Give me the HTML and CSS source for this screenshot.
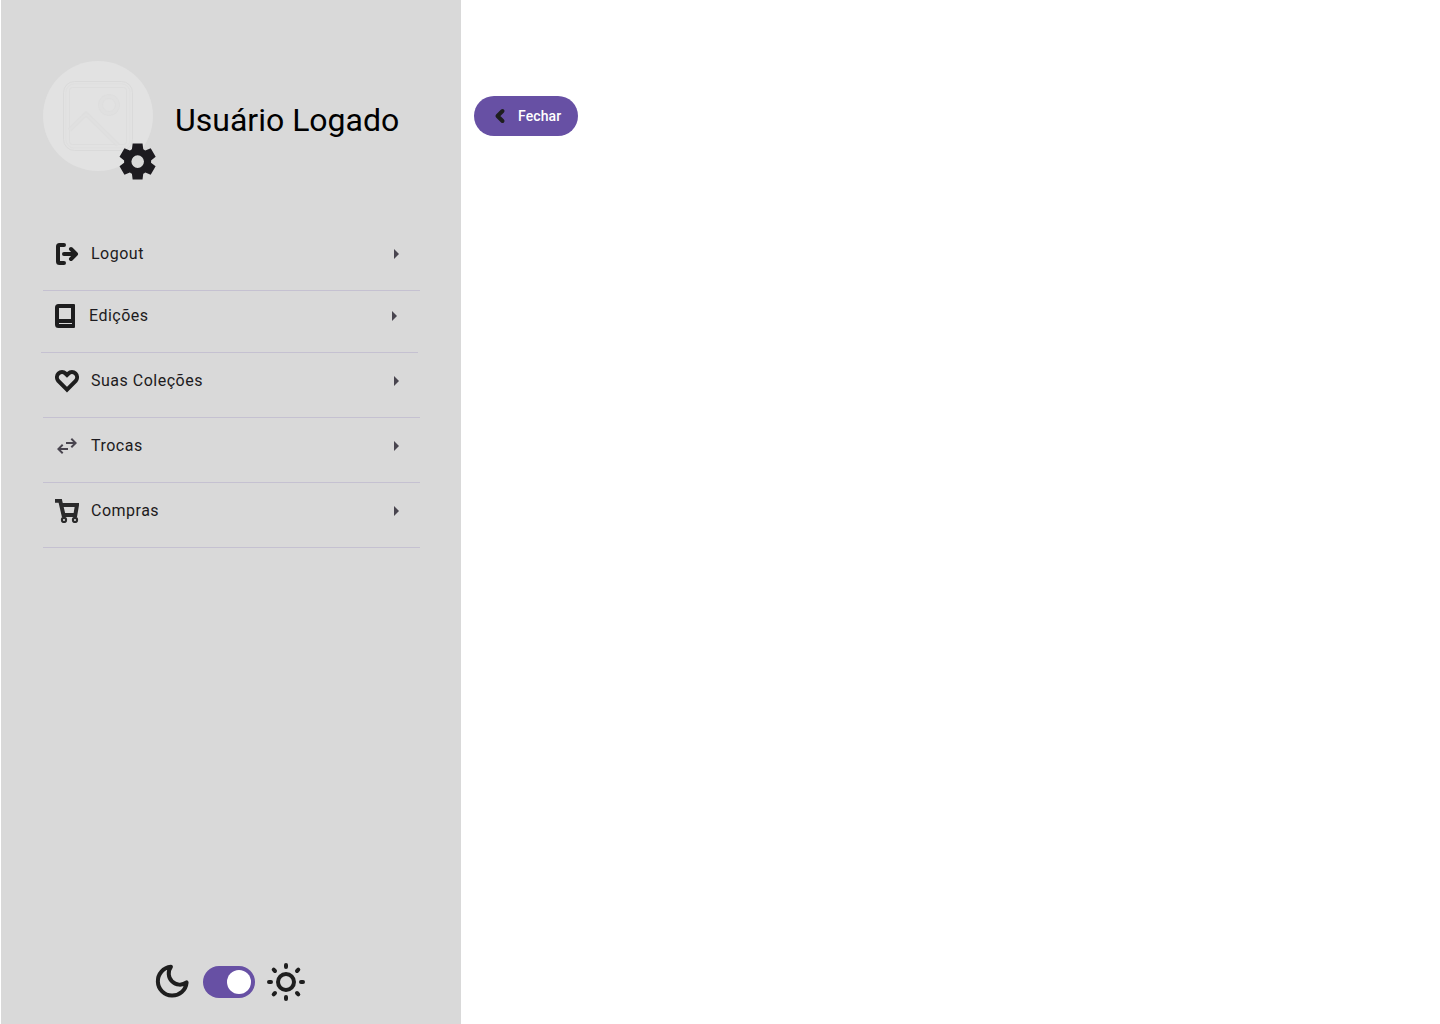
FILE: index.html
```html
<!DOCTYPE html>
<html lang="pt-BR">
<head>
<meta charset="utf-8">
<title>Menu do usuário</title>
<link rel="stylesheet" href="styles.css">
</head>
<body>
<div class="page">
  <aside class="sidebar">
    <header class="profile">
      <div class="avatar">
        <svg class="avatar-image" viewBox="0 0 70 70" fill="none">
          <g stroke="#dadada" stroke-width="1">
            <rect x=".5" y=".5" width="69" height="69" rx="11"/>
            <rect x="3" y="3" width="64" height="64" rx="8" stroke="#dfdfdf"/>
            <rect x="6.500" y="6.500" width="57" height="57" rx="3" stroke="#dddddd"/>
          </g>
          <circle cx="46" cy="24" r="8.500" stroke="#dedede" stroke-width="5"/>
          <circle cx="46" cy="24" r="8.500" stroke="#e0e0e0" stroke-width="3"/>
          <path d="M6.500 49L23 33L55 64" stroke="#dedede" stroke-width="4.500"/>
          <path d="M6.500 49L23 33L55 64" stroke="#e0e0e0" stroke-width="2.500"/>
        </svg>
        <svg class="gear" viewBox="0 0 24 24"><path fill="#1d1b20" fill-rule="evenodd" d="M9.25 22l-.4-3.2q-.325-.125-.612-.3-.288-.175-.563-.375L4.7 19.375l-2.75-4.75 2.575-1.95Q4.5 12.5 4.5 12.337v-.675q0-.162.025-.337L1.95 9.375l2.75-4.75 2.975 1.25q.275-.2.575-.375.3-.175.6-.3l.4-3.2h5.5l.4 3.2q.325.125.613.3.287.175.562.375l2.975-1.25 2.75 4.75-2.575 1.95q.025.175.025.338v.674q0 .163-.05.338l2.575 1.95-2.75 4.75-2.95-1.25q-.275.2-.575.375-.3.175-.6.3l-.4 3.2zM12.05 15.5a3.5 3.5 0 1 0 0-7 3.5 3.5 0 0 0 0 7z"/></svg>
      </div>
      <h1 class="name">Usuário Logado</h1>
    </header>
    <nav class="menu">
      <a class="item">
        <svg class="icon" viewBox="0 0 24 24" fill="none" stroke="#1e1e1e" stroke-width="4" stroke-linecap="round" stroke-linejoin="round"><path d="M9 3H4.5Q3 3 3 4.5v15Q3 21 4.5 21H9M9 12h11M16 7l5 5-5 5"/></svg>
        <span class="label">Logout</span>
        <svg class="caret" viewBox="0 0 5 10"><path d="M0 0l5 5-5 5z"/></svg>
      </a>
      <a class="item item-editions">
        <svg class="icon" viewBox="0 0 24 24"><path fill="#1d1d1e" fill-rule="evenodd" d="M3.500 0H19q1 0 1 1v22q0 1-1 1H3.500Q0 24 0 20.500V3.500Q0 0 3.500 0zM4 4v11h12V4zM4 19v1h13v-1z"/></svg>
        <span class="label">Edições</span>
        <svg class="caret" viewBox="0 0 5 10"><path d="M0 0l5 5-5 5z"/></svg>
      </a>
      <a class="item">
        <svg class="icon" viewBox="0 0 24 24" fill="none" stroke="#1e1e1e" stroke-width="4"><path d="M12 20.600L3.300 11.900C1.500 9.700 1.500 6.400 3.500 4.500 5.500 2.600 8.600 2.600 10.500 4.500L12 6l1.500-1.500c1.900-1.900 5-1.900 7 0 2 1.900 2 5.200.2 7.400z"/></svg>
        <span class="label">Suas Coleções</span>
        <svg class="caret" viewBox="0 0 5 10"><path d="M0 0l5 5-5 5z"/></svg>
      </a>
      <a class="item">
        <svg class="icon" viewBox="0 0 24 24"><path fill="#49454f" d="M7 20l-5-5 5-5 1.400 1.400L5.800 14H13v2H5.800l2.600 2.600zM17 14l-1.400-1.400L18.200 10H11V8h7.200l-2.600-2.600L17 4l5 5z"/></svg>
        <span class="label">Trocas</span>
        <svg class="caret" viewBox="0 0 5 10"><path d="M0 0l5 5-5 5z"/></svg>
      </a>
      <a class="item">
        <svg class="icon" viewBox="0 0 24 24" fill="none" stroke="#2a2a2b"><path stroke-width="4" d="M0 1.800h5.200L8.500 16H20.300L22 6H6.200"/><circle cx="9" cy="21" r="2.100" stroke-width="2.100"/><circle cx="20" cy="21" r="2.100" stroke-width="2.100"/></svg>
        <span class="label">Compras</span>
        <svg class="caret" viewBox="0 0 5 10"><path d="M0 0l5 5-5 5z"/></svg>
      </a>
    </nav>
    <footer class="theme">
      <svg class="moon" viewBox="0 0 24 24" fill="none" stroke="#1e1e1e" stroke-width="2.500" stroke-linecap="round" stroke-linejoin="round"><path d="M21 12.790A9 9 0 1 1 11.210 3 7 7 0 0 0 21 12.790z"/></svg>
      <span class="switch"><span class="knob"></span></span>
      <svg class="sun" viewBox="-19 -19 38 38" fill="none" stroke="#1e1e1e" stroke-width="4" stroke-linecap="round"><circle r="8"/><path d="M0-17v2M0 15v2M-17 0h2M15 0h2M-12.300-12.300l1.300 1.300M11 11l1.300 1.300M-12.300 12.300l1.300-1.300M11-11l1.300-1.300"/></svg>
    </footer>
  </aside>
  <main class="content">
    <button class="close" type="button">
      <svg class="chevron" viewBox="0 0 18 18" fill="none" stroke="#1e1e1e" stroke-width="4" stroke-linecap="round" stroke-linejoin="round"><path d="M10.500 4L5.500 9l5 5"/></svg>
      Fechar
    </button>
  </main>
</div>
</body>
</html>
```
FILE: styles.css
```css
* { box-sizing: border-box; }
body { margin: 0; background: #fff; font-family: Roboto, sans-serif; }
.page { display: flex; height: 1024px; padding-left: 1px; }
.sidebar { display: flex; flex-direction: column; width: 460px; padding: 61px 41px 23px 42px; background: #d9d9d9; }
.profile { display: flex; align-items: center; gap: 22px; height: 110px; }
.avatar { position: relative; display: flex; align-items: center; justify-content: center; width: 110px; height: 110px; border-radius: 50%; background: #e2e2e2; }
.avatar-image { width: 70px; height: 70px; }
.gear { position: absolute; left: 72.800px; top: 78.800px; width: 43.200px; height: 43.200px; }
.name { margin: 8px 0 0; font-size: 32px; line-height: 40px; font-weight: 400; color: #000; white-space: nowrap; }
.menu { display: flex; flex-direction: column; margin-top: 55px; }
.item { display: flex; align-items: center; gap: 12px; height: 65px; padding: 0 21px 9px 12px; border-bottom: 1px solid #c5c1d1; color: #1d1b20; }
.item-editions { margin: -3px 2px 0 -2px; padding-left: 14px; }
.item-editions .icon { margin-right: -2px; }
.icon { flex: none; width: 24px; height: 24px; }
.label { flex: 1; font-size: 16px; line-height: 24px; letter-spacing: .5px; }
.caret { width: 5px; height: 10px; fill: #49454f; }
.theme { display: flex; align-items: center; justify-content: center; gap: 12px; height: 38px; margin: auto 0 0 -5px; }
.moon { width: 38.400px; height: 38.400px; margin: 0 -1px 2px 0; }
.switch { display: flex; align-items: center; justify-content: flex-end; width: 52px; height: 32px; padding: 4px; border-radius: 16px; background: #6750a4; }
.knob { width: 24px; height: 24px; border-radius: 50%; background: #fff; }
.sun { width: 38px; height: 38px; }
.content { flex: 1; padding: 96px 13px; }
.close { display: flex; align-items: center; gap: 8px; width: 104px; height: 40px; padding: 0 16px 0 18px; border: 0; border-radius: 20px; background: #6750a4; color: #fff; font: 500 14px/20px Roboto, sans-serif; letter-spacing: .1px; }
.chevron { flex: none; width: 18px; height: 18px; }
```
